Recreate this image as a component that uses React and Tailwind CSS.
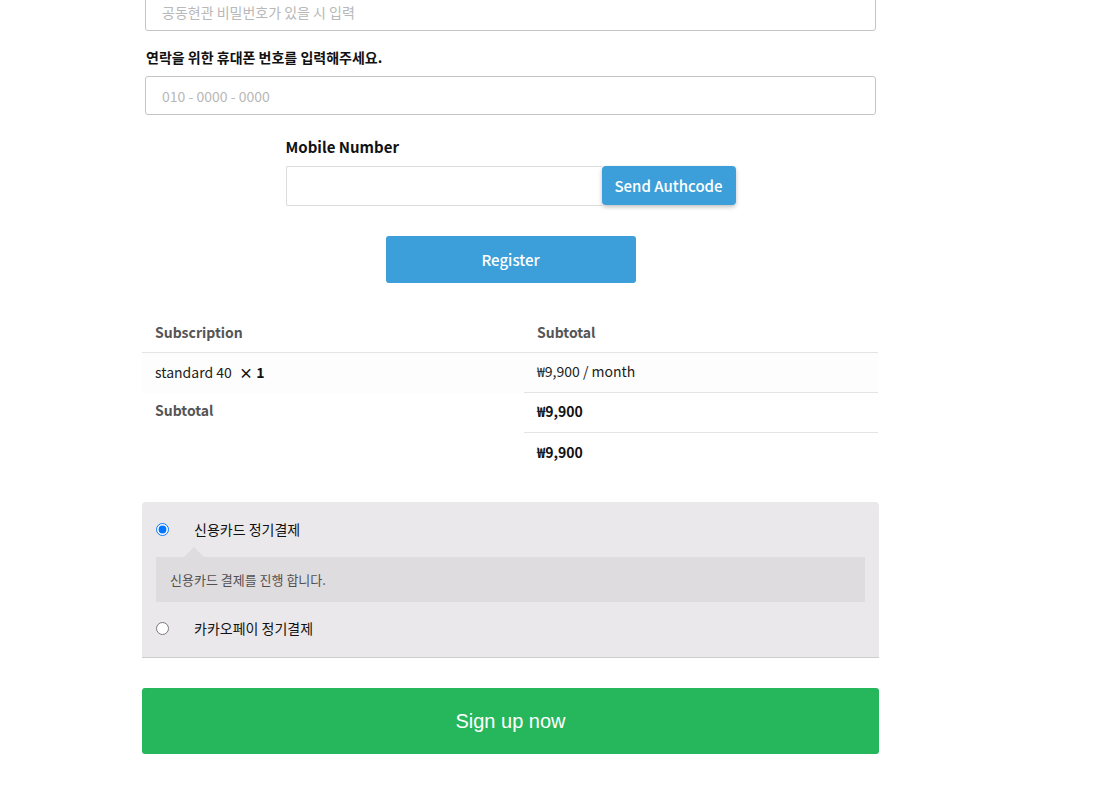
import React from "react";

const font = { fontFamily: '"Noto Sans CJK KR", "Noto Sans", sans-serif' };

export default function App() {
  return (
    <div className="min-h-[796px] w-[1098px] bg-white overflow-hidden" style={font}>
      <div className="ml-[142px] w-[737px] -mt-[8px]">
        {/* top inputs */}
        <div className="px-[3px]">
          <div className="h-[39px] border border-[#c4c4c4] rounded-[3px] flex items-center pl-[16px] pt-px text-[14px] text-[#b8b8b8]">
            공동현관 비밀번호가 있을 시 입력
          </div>
          <div className="mt-[16px] h-[20px] flex items-center pl-px text-[14px] font-bold text-[#111]">
            연락을 위한 휴대폰 번호를 입력해주세요.
          </div>
          <div className="mt-[9px] h-[39px] border border-[#c4c4c4] rounded-[3px] flex items-center pl-[16px] pt-px text-[14px] text-[#b8b8b8]">
            010 - 0000 - 0000
          </div>
        </div>

        {/* mobile auth */}
        <div className="w-[450px] mx-auto mt-[20px]">
          <div className="h-[24px] flex items-center text-[15px] font-bold text-[#111]">Mobile Number</div>
          <div className="mt-[7px] flex items-start">
            <div className="w-[316px] h-[40px] border border-[#dcdcdc] border-r-0 rounded-l-[2px]" />
            <div className="w-[134px] h-[39px] bg-[#3c9fda] rounded-[4px] shadow-[0_2px_4px_rgba(0,0,0,0.25)] flex items-center justify-center pt-px text-[15px] text-white font-medium">
              Send Authcode
            </div>
          </div>
        </div>

        <div className="mt-[30px] flex justify-center">
          <div className="w-[250px] h-[47px] bg-[#3c9fda] rounded-[3px] flex items-center justify-center pt-px text-[15px] text-white font-medium">
            Register
          </div>
        </div>

        {/* order table */}
        <div className="mt-[30px] mr-px text-[14px]">
          <div className="grid grid-cols-[382px_1fr] h-[40px] border-b border-[#e4e4e4] items-center font-bold text-[#555]">
            <div className="pl-[13px]">Subscription</div>
            <div className="pl-[13px]">Subtotal</div>
          </div>
          <div className="grid grid-cols-[382px_1fr] h-[40px] items-center bg-[#fdfdfd] text-[#222]">
            <div className="pl-[13px] pb-[2px]">
              standard 40 <span className="ml-[4px] font-bold text-[#111]">× 1</span>
            </div>
            <div className="pl-[13px] pb-[2px] h-full flex items-center border-b border-[#e4e4e4]">₩9,900 / month</div>
          </div>
          <div className="grid grid-cols-[382px_1fr]">
            <div className="pl-[13px] pt-[7px] font-bold text-[#555]">Subtotal</div>
            <div>
              <div className="pl-[13px] pb-[2px] h-[40px] flex items-center border-b border-[#e4e4e4] font-bold text-[#111]">₩9,900</div>
              <div className="pl-[13px] pb-[2px] h-[40px] flex items-center font-bold text-[#111]">₩9,900</div>
            </div>
          </div>
        </div>

        {/* payment methods */}
        <div className="mt-[29px] bg-[#ebe8eb] rounded-t-[4px] border-b border-[#cfcccf] pt-[15px] pb-[17px] px-[14px] text-[14px]">
          <label className="flex items-center h-[24px]">
            <input type="radio" name="pay" defaultChecked className="m-0 w-[13px] h-[13px]" />
            <span className="ml-[25px] text-[#111]">신용카드 정기결제</span>
          </label>
          <div className="relative mt-[16px] h-[45px] bg-[#dfdcdf] flex items-center pl-[14px] text-[13px] text-[#515151]">
            <div className="absolute -top-[10px] left-[28px] w-0 h-0 border-l-[10px] border-r-[10px] border-b-[10px] border-l-transparent border-r-transparent border-b-[#dfdcdf]" />
            신용카드 결제를 진행 합니다.
          </div>
          <label className="mt-[14px] flex items-center h-[24px]">
            <input type="radio" name="pay" className="m-0 w-[13px] h-[13px]" />
            <span className="ml-[25px] text-[#111]">카카오페이 정기결제</span>
          </label>
        </div>

        <div
          className="mt-[30px] h-[66px] bg-[#26b65b] rounded-[3px] flex items-center justify-center text-[20px] text-white"
          style={{ fontFamily: '"Liberation Sans", Arial, sans-serif' }}
        >
          Sign up now
        </div>
      </div>
    </div>
  );
}
